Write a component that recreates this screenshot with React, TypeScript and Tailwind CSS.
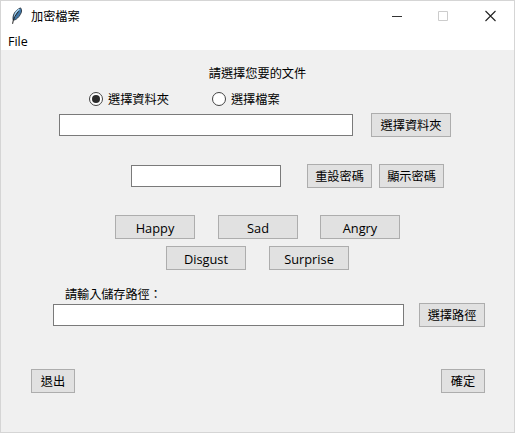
import type { ReactNode } from "react";

function Button({ children, className = "" }: { children: ReactNode; className?: string }) {
  return (
    <button
      type="button"
      className={`flex h-6 shrink-0 items-center justify-center whitespace-nowrap border border-[#adadad] bg-[#e1e1e1] pt-[2px] leading-none ${className}`}
    >
      {children}
    </button>
  );
}

function Entry({ className = "" }: { className?: string }) {
  return <input type="text" className={`block h-[22px] shrink-0 border border-[#7a7a7a] bg-white px-1 outline-none ${className}`} />;
}

function Radio({ label, checked = false }: { label: string; checked?: boolean }) {
  return (
    <label className="flex h-4 items-center gap-[5px]">
      <span className="flex size-[14px] items-center justify-center rounded-full border border-[#444] bg-white">
        {checked && <span className="size-2 rounded-full bg-[#2b2b2b]" />}
      </span>
      <span className="pt-[2px] leading-4">{label}</span>
    </label>
  );
}

function Feather() {
  return (
    <svg width="14" height="18" viewBox="0 0 14 18">
      <path d="M3.2 13.2C2.2 8.8 4.8 3 10.6 .9c1.5 1.8 1.2 4.4-.2 6.4-.8 1.6-1.7 2.7-2.8 3.7-1.2 1.3-2.6 2-4.4 2.2Z" fill="#3f77a8" stroke="#29333e" strokeWidth=".9" />
      <path d="M4.6 9.8C5.1 6.5 6.7 3.8 9.3 2.2" fill="none" stroke="#a8d3ee" strokeWidth="1.4" />
      <path d="M2.6 16.8C3 12.4 5.4 7.8 8.6 4.4" fill="none" stroke="#202020" strokeWidth="1" />
    </svg>
  );
}

export default function App() {
  return (
    <div className="flex h-[433px] w-[515px] flex-col overflow-hidden border border-[#d5d5d5] bg-[#f0f0f0] font-['Open_Sans','Noto_Sans_CJK_TC',sans-serif] text-[12.2px] text-black">
      <header className="flex h-[30px] shrink-0 items-center bg-white pl-[9px] pr-[17px]">
        <Feather />
        <h1 className="ml-[7px] pt-px leading-4">加密檔案</h1>
        <div className="ml-auto flex items-center">
          <svg width="105" height="12" viewBox="0 0 105 12" fill="none">
            <path d="M0 6.5h10" stroke="#333" />
            <path d="M46.5 1.5h9v9h-9z" stroke="#ccc" />
            <path d="M93.5 1l10 10m0-10l-10 10" stroke="#222" strokeWidth="1.1" />
          </svg>
        </div>
      </header>
      <nav className="flex h-[19px] shrink-0 items-center bg-white pl-[7px] pt-[2px] text-[12.5px] leading-4">File</nav>
      <main className="flex flex-col">
        <p className="mt-4 h-4 text-center leading-4">請選擇您要的文件</p>
        <div className="mt-[9px] flex gap-[43px] pl-[88px]">
          <Radio label="選擇資料夾" checked />
          <Radio label="選擇檔案" />
        </div>
        <div className="mt-[6px] flex items-center gap-[18px] pl-[58px]">
          <Entry className="w-[294px]" />
          <Button className="w-[80px]">選擇資料夾</Button>
        </div>
        <div className="mt-[27px] flex items-center pl-[130px]">
          <Entry className="w-[150px]" />
          <Button className="ml-[26px] w-[65px]">重設密碼</Button>
          <Button className="ml-[7px] w-[65px]">顯示密碼</Button>
        </div>
        <div className="mt-[27px] flex pl-[114px] text-[12.8px]">
          <Button className="w-[80px]">Happy</Button>
          <Button className="ml-[23px] w-[80px]">Sad</Button>
          <Button className="ml-[22px] w-[80px]">Angry</Button>
        </div>
        <div className="mt-[7px] flex gap-[23px] pl-[165px] text-[12.8px]">
          <Button className="w-[80px]">Disgust</Button>
          <Button className="w-[80px]">Surprise</Button>
        </div>
        <p className="mt-[17px] h-4 pl-16 leading-4 tracking-[-0.1px]">請輸入儲存路徑：</p>
        <div className="flex items-center gap-[15px] pl-[52px]">
          <Entry className="w-[351px]" />
          <Button className="w-[66px]">選擇路徑</Button>
        </div>
        <div className="mt-[42px] flex justify-between pl-[30px] pr-[29px]">
          <Button className="w-11">退出</Button>
          <Button className="w-11">確定</Button>
        </div>
      </main>
    </div>
  );
}
